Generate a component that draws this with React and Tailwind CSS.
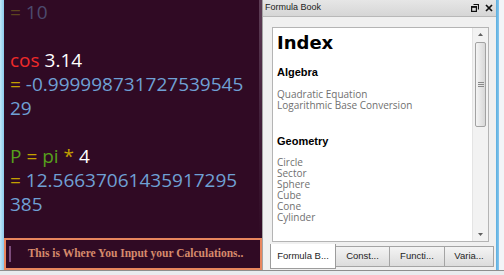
import React from 'react';

const numFont = { fontFamily: '"Open Sans", "Noto Sans", sans-serif' };

function RestoreIcon() {
  return (
    <svg width="8" height="8" viewBox="0 0 8 8" className="block">
      <path d="M2.5 0.5h5v5" fill="none" stroke="#111" strokeWidth="1.2" />
      <rect x="0.6" y="2.6" width="4.8" height="4.8" fill="none" stroke="#111" strokeWidth="1.2" />
      <path d="M0.6 3h4.8" stroke="#111" strokeWidth="1.6" />
    </svg>
  );
}

function CloseIcon() {
  return (
    <svg width="8" height="8" viewBox="0 0 8 8" className="block">
      <path d="M1 1L7 7M7 1L1 7" stroke="#111" strokeWidth="1.7" />
    </svg>
  );
}

function Scrollbar() {
  return (
    <div className="w-[16px] flex flex-col bg-[#f2f2f2] border-l border-[#e4e4e4]">
      <div className="h-[12px] flex items-center justify-center">
        <svg width="5" height="3" viewBox="0 0 5 3"><path d="M0 3L2.5 0L5 3Z" fill="#606060" /></svg>
      </div>
      <div className="mt-[2px] mx-[2px] h-[85px] rounded-[2px] border border-[#a2a2a2] bg-gradient-to-r from-[#f4f4f4] to-[#d8d8d8] flex flex-col items-center justify-center gap-[1px]">
        <div className="w-[6px] h-[1px] bg-[#8a8a8a]" />
        <div className="w-[6px] h-[1px] bg-[#8a8a8a]" />
        <div className="w-[6px] h-[1px] bg-[#8a8a8a]" />
      </div>
      <div className="flex-1" />
      <div className="h-[13px] flex items-center justify-center">
        <svg width="5" height="3" viewBox="0 0 5 3"><path d="M0 0L2.5 3L5 0Z" fill="#606060" /></svg>
      </div>
    </div>
  );
}

export default function App() {
  const sans = { fontFamily: '"Liberation Sans", Arial, sans-serif' };
  const geometry = ['Circle', 'Sector', 'Sphere', 'Cube', 'Cone', 'Cylinder'];

  return (
    <div className="w-[504px] h-[275px] flex flex-col overflow-hidden bg-[#eceef1]">
      <div className="h-[270px] flex">
        {/* left window edge */}
        <div className="w-[4px] bg-gradient-to-r from-[#c2e6f8] to-[#8ccaec]" />

        {/* calculator panel */}
        <div className="w-[258px] flex flex-col bg-[#300a24]">
          <div className="flex-1 flex">
            <div className="flex-1 pl-[6px] text-[19px] leading-[24px] whitespace-nowrap" style={numFont}>
              <div><span className="text-[#5d4520]">=</span> <span className="text-[#4c4a6e]">10</span></div>
              <div>&nbsp;</div>
              <div><span className="text-[#ef2a2a]">cos</span> <span className="text-white">3.14</span></div>
              <div><span className="text-[#c4a000]">=</span> <span className="text-[#6fa0d4]">-0.999998731727539545</span></div>
              <div className="text-[#6fa0d4]">29</div>
              <div>&nbsp;</div>
              <div>
                <span className="text-[#56a01c]">P</span> <span className="text-[#c4a000]">=</span>{' '}
                <span className="text-[#56a01c]">pi</span> <span className="text-[#c4a000]">*</span>{' '}
                <span className="text-white">4</span>
              </div>
              <div><span className="text-[#c4a000]">=</span> <span className="text-[#6fa0d4]">12.56637061435917295</span></div>
              <div className="text-[#6fa0d4]">385</div>
            </div>
            <div className="w-[3px] bg-gradient-to-b from-[#5e3e56] via-[#42203a] to-[#300a24]" />
          </div>
          <div className="h-[32px] border-2 border-[#e8865e] flex items-center pl-[3px]">
            <div className="w-[2px] h-[16px] bg-[#7d4c7c]" />
            <div
              className="flex-1 text-center font-bold text-[11.5px] text-[#d68a6c]"
              style={{ fontFamily: '"Liberation Serif", "Times New Roman", serif' }}
            >
              This is Where You Input your Calculations..
            </div>
          </div>
        </div>

        {/* formula book */}
        <div className="w-[234px] flex flex-col bg-[#f0f0f0] border-l border-[#a4a4a4]">
          <div className="h-[17px] flex items-center justify-between pl-[2px] pr-[3px] bg-gradient-to-b from-[#e6e6e6] to-[#d6d6d6] border-b border-[#b8b8b8]">
            <span className="text-[9px] text-[#222]" style={sans}>Formula Book</span>
            <div className="flex items-center gap-[6px]">
              <RestoreIcon />
              <CloseIcon />
            </div>
          </div>

          <div className="pl-[9px] pr-[7px] pt-[10px]">
            <div className="h-[215px] flex bg-white border border-[#b4b4b4]">
              <div className="flex-1 pl-[4px] pt-[4px]">
                <div className="text-[18px] leading-[21px] font-bold text-black" style={{ fontFamily: '"DejaVu Sans", Verdana, sans-serif' }}>Index</div>
                <div className="mt-[13px] text-[11px] leading-[13px] font-bold text-black" style={sans}>Algebra</div>
                <div className="mt-[10px] text-[10px] leading-[11px] text-[#707070]" style={numFont}>
                  <div>Quadratic Equation</div>
                  <div>Logarithmic Base Conversion</div>
                </div>
                <div className="mt-[24px] text-[11px] leading-[13px] font-bold text-black" style={sans}>Geometry</div>
                <div className="mt-[9px] text-[10px] leading-[11px] text-[#707070]" style={numFont}>
                  {geometry.map((g) => (
                    <div key={g}>{g}</div>
                  ))}
                </div>
              </div>
              <Scrollbar />
            </div>
          </div>

          <div className="mt-[2px] pl-[7px] flex items-start text-[9.5px] text-[#1e1e1e]" style={sans}>
            <div className="w-[66px] h-[25px] bg-white border border-t-0 border-[#9c9c9c] flex items-center justify-center">Formula B...</div>
            <div className="mt-[2px] w-[54px] h-[21px] bg-gradient-to-b from-[#f4f4f4] to-[#dcdcdc] border border-l-0 border-[#a4a4a4] flex items-center justify-center">Const...</div>
            <div className="mt-[2px] w-[55px] h-[21px] bg-gradient-to-b from-[#f4f4f4] to-[#dcdcdc] border border-l-0 border-[#a4a4a4] flex items-center justify-center">Functi...</div>
            <div className="mt-[2px] w-[49px] h-[21px] bg-gradient-to-b from-[#f4f4f4] to-[#dcdcdc] border border-l-0 border-[#a4a4a4] flex items-center justify-center">Varia...</div>
          </div>
        </div>

        {/* right window edge */}
        <div className="w-[3px] bg-gradient-to-r from-[#5aaee0] to-[#86c6ec]" />
        <div className="flex-1 bg-[#f2f4f7]" />
      </div>
      <div className="flex-1 border-t border-[#8e8e8e] bg-[#e9ebee]" />
    </div>
  );
}
